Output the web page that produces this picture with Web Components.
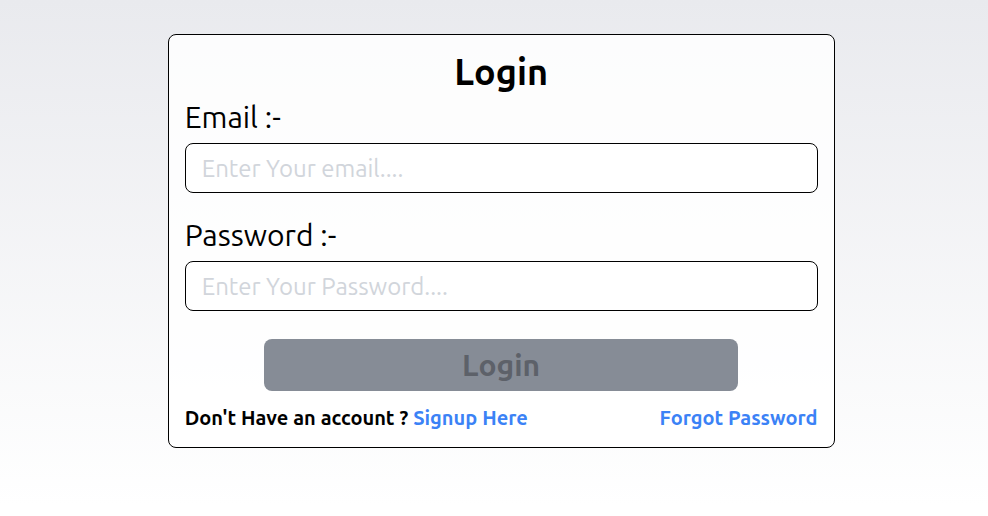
<!DOCTYPE html>
<html lang="en">
<head>
<meta charset="utf-8">
<title>Login</title>
<style>
html { height: 100%; }
body { margin: 0; height: 100%; overflow: hidden; color: #000; background: linear-gradient(#e9eaee, #fff 98%); font-family: Ubuntu, "Open Sans", sans-serif; }
</style>
</head>
<body>
<login-page></login-page>
<script>
class BaseElement extends HTMLElement {
  connectedCallback() {
    if (this.shadowRoot) return;
    this.attachShadow({ mode: 'open' }).innerHTML = this.render();
  }
}

class LoginCard extends BaseElement {
  render() {
    return `<style>
      :host { display: flex; flex-direction: column; box-sizing: border-box; width: 666.9px; height: 414px; padding: 15px 16px; border: 1px solid #000; border-radius: 8px; background: rgba(255,255,255,.85); }
      h1 { margin: 0; height: 44px; font-size: 36px; line-height: 44px; font-weight: 600; text-align: center; }
    </style><h1>Login</h1><slot></slot>`;
  }
}

class FormField extends BaseElement {
  render() {
    return `<style>
      :host { display: block; margin-bottom: 19px; }
      label { display: block; height: 49px; font-size: 30px; line-height: 47px; font-weight: 400; }
      input { display: block; box-sizing: border-box; width: 100%; height: 50px; padding: 0 16px; border: 1px solid #000; border-radius: 8px; background: #fff; font: 400 24px/32px Ubuntu, "Open Sans", sans-serif; }
      input::placeholder { color: #d1d5db; opacity: 1; }
    </style><label for="f">${this.getAttribute('label')}</label>
    <input id="f" type="${this.getAttribute('type')}" placeholder="${this.getAttribute('placeholder')}">`;
  }
}

class SubmitButton extends BaseElement {
  render() {
    return `<style>
      :host { display: block; width: 474px; margin: 9px auto 0; }
      button { display: block; width: 100%; height: 52px; padding: 0; border: 0; border-radius: 8px; background: #868c96; color: #5d6169; font: 600 30px/36px Ubuntu, "Open Sans", sans-serif; }
    </style><button disabled><slot></slot></button>`;
  }
}

class CardFooter extends BaseElement {
  render() {
    return `<style>
      :host { display: flex; justify-content: space-between; margin-top: 13px; font-size: 20px; line-height: 28px; font-weight: 600; white-space: nowrap; }
      a { color: #3b82f6; text-decoration: none; cursor: pointer; }
      span { word-spacing: .2px; }
    </style><span>Don't Have an account ? <a>Signup Here</a></span><a>Forgot Password</a>`;
  }
}

class LoginPage extends BaseElement {
  render() {
    return `<style>
      :host { display: flex; justify-content: center; padding: 34px 0 0 14.25px; }
    </style>
    <login-card>
      <form-field label="Email :-" type="email" placeholder="Enter Your email...."></form-field>
      <form-field label="Password :-" type="password" placeholder="Enter Your Password...."></form-field>
      <submit-button>Login</submit-button>
      <card-footer></card-footer>
    </login-card>`;
  }
}

customElements.define('login-card', LoginCard);
customElements.define('form-field', FormField);
customElements.define('submit-button', SubmitButton);
customElements.define('card-footer', CardFooter);
customElements.define('login-page', LoginPage);
</script>
</body>
</html>
